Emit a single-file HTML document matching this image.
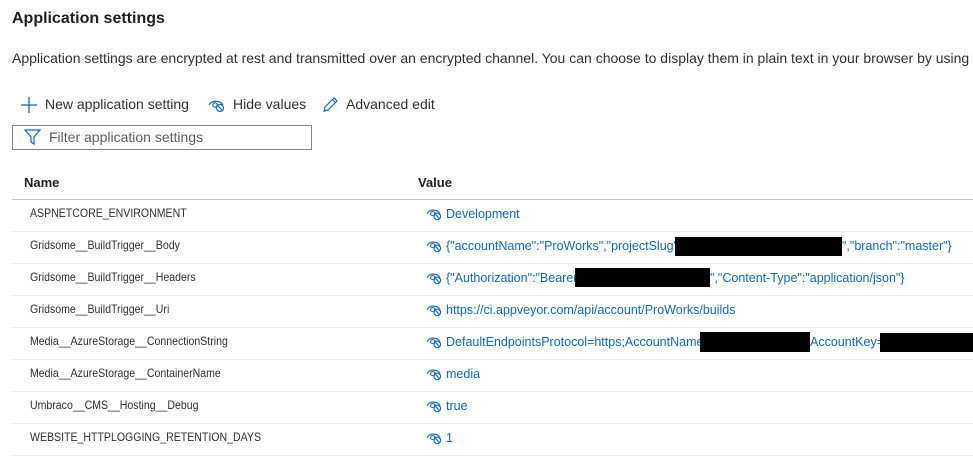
<!DOCTYPE html>
<html><head><style>
body{margin:0;width:973px;height:470px;overflow:hidden;background:#fff;font-family:"Liberation Sans",sans-serif;color:#323130;position:relative}
.a{position:absolute;white-space:nowrap}
.t{font-size:13px}
.tb{font-size:14px}
.n{font-size:12px;transform:scaleX(0.88);transform-origin:0 0;color:#323130}
.v{color:#0f6cbd;font-size:12.5px}
.line{position:absolute;left:12px;right:0;height:1px;background:#edebe9}
.blk{position:absolute;background:#000}
svg.e{position:absolute}
</style></head><body>
<div class="a" style="left:12px;top:10px;font-size:16px;font-weight:bold;color:#201f1e">Application settings</div>
<div class="a tb" style="left:12px;top:50px">Application settings are encrypted at rest and transmitted over an encrypted channel. You can choose to display them in plain text in your browser by using</div>

<svg class="e" style="left:20px;top:96px" width="18" height="18"><path d="M9 1V17M1 9H17" stroke="#0f6cbd" stroke-width="1.3"/></svg>
<div class="a tb" style="left:45px;top:96px">New application setting</div>
<svg class="e" style="left:208px;top:98px" width="18" height="16" viewBox="0 0 18 16"><path d="M1 7C4 2 12 2 15 7" fill="none" stroke="#0f6cbd" stroke-width="1.2"/><circle cx="7" cy="7" r="2.2" fill="none" stroke="#0f6cbd" stroke-width="1.2"/><circle cx="12" cy="10" r="3.5" fill="#fff" stroke="#0f6cbd" stroke-width="1.2"/><path d="M9.5 7.5L14.5 12.5" stroke="#0f6cbd" stroke-width="1.2"/></svg>
<div class="a tb" style="left:233px;top:96px">Hide values</div>
<svg class="e" style="left:322px;top:96px" width="17" height="17"><path d="M2 15L3 11L12 2L15 5L6 14Z M10.5 3.5L13.5 6.5" fill="none" stroke="#0f6cbd" stroke-width="1.2"/></svg>
<div class="a tb" style="left:346px;top:96px">Advanced edit</div>

<div style="position:absolute;left:12px;top:125px;width:298px;height:23px;border:1px solid #8a8886"></div>
<svg class="e" style="left:24px;top:129px" width="17" height="16"><path d="M1 1H16L10 8V15L7 13V8Z" fill="none" stroke="#0f6cbd" stroke-width="1.2"/></svg>
<div class="a tb" style="left:49px;top:129px;color:#605e5c">Filter application settings</div>

<div class="a t" style="left:24px;top:175px;font-weight:bold;color:#201f1e">Name</div>
<div class="a t" style="left:418px;top:175px;font-weight:bold;color:#201f1e">Value</div>
<div class="line" style="top:199px;background:#c8c6c4"></div>

<div id="rows"></div>
<script>
var n=["ASPNETCORE_ENVIRONMENT","Gridsome__BuildTrigger__Body","Gridsome__BuildTrigger__Headers","Gridsome__BuildTrigger__Uri","Media__AzureStorage__ConnectionString","Media__AzureStorage__ContainerName","Umbraco__CMS__Hosting__Debug","WEBSITE_HTTPLOGGING_RETENTION_DAYS"];
var v=["Development",'{"accountName":"ProWorks","projectSlug":"','{"Authorization":"Bearer ',"https://ci.appveyor.com/api/account/ProWorks/builds","DefaultEndpointsProtocol=https;AccountName=","media","true","1"];
var ic='<path d="M1 7C4 2 12 2 15 7" fill="none" stroke="#0f6cbd" stroke-width="1.2"/><circle cx="7" cy="7" r="2.2" fill="none" stroke="#0f6cbd" stroke-width="1.2"/><circle cx="12" cy="10" r="3.5" fill="#fff" stroke="#0f6cbd" stroke-width="1.2"/><path d="M9.5 7.5L14.5 12.5" stroke="#0f6cbd" stroke-width="1.2"/>';
var h="";
for(var i=0;i<8;i++){var y=200+i*32;
h+='<div class="a n" style="left:30px;top:'+(y+6)+'px">'+n[i]+'</div>';
h+='<svg class="e" style="left:426px;top:'+(y+7)+'px" width="17" height="15" viewBox="0 0 18 16">'+ic+'</svg>';
h+='<div class="a v" style="left:446px;top:'+(y+7)+'px">'+v[i]+'</div>';
h+='<div class="line" style="top:'+(y+31)+'px"></div>';}
h+='<div class="a v" style="left:842px;top:239px">","branch":"master"}</div>';
h+='<div class="a v" style="left:710px;top:271px">","Content-Type":"application/json"}</div>';
h+='<div class="a v" style="left:810px;top:335px">AccountKey=</div>';
document.getElementById("rows").innerHTML=h;
</script>
<div class="blk" style="left:675px;top:237px;width:167px;height:19px"></div>
<div class="blk" style="left:575px;top:268px;width:135px;height:19px"></div>
<div class="blk" style="left:700px;top:332px;width:110px;height:20px"></div>
<div class="blk" style="left:880px;top:333px;width:93px;height:19px"></div>
</body></html>
